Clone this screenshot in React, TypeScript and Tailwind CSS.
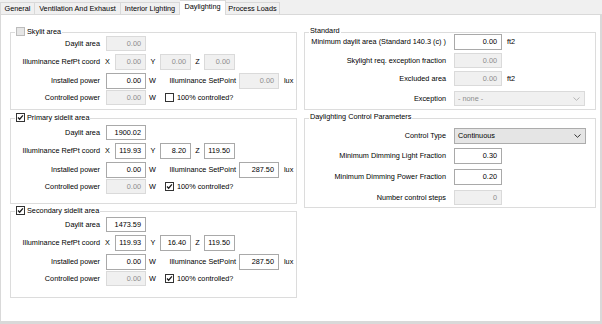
import type { ReactNode } from 'react';

type BoxProps = { value: string; off?: boolean; className: string };

function Box({ value, off, className }: BoxProps) {
  return (
    <div
      className={`flex h-full items-center justify-end border pr-[4px] ${
        off ? 'border-[#dadada] bg-[#f0f0f0] text-[#8d8d8d]' : 'border-[#a9a9a9] bg-white text-black'
      } ${className}`}
    >
      {value}
    </div>
  );
}

function Check({ on, off }: { on?: boolean; off?: boolean }) {
  return (
    <span
      className={`flex h-[9px] w-[9px] shrink-0 items-center justify-center border ${
        off ? 'border-[#bcbcbc] bg-[#e6e6e6]' : 'border-[#333333] bg-white'
      }`}
    >
      {on && (
        <svg viewBox="0 0 9 9" className="h-[7px] w-[7px]">
          <path d="M1.3 4.6 L3.4 6.7 L7.6 1.8" stroke="#1a1a1a" strokeWidth="1.7" fill="none" />
        </svg>
      )}
    </span>
  );
}

function Chevron({ color }: { color: string }) {
  return (
    <svg viewBox="0 0 7 4" className="h-[4px] w-[7px]">
      <path d="M0.5 0.5 L3.5 3.3 L6.5 0.5" stroke={color} strokeWidth="1" fill="none" />
    </svg>
  );
}

type Side = {
  title: string;
  on: boolean;
  off: boolean;
  daylit: string;
  x: string;
  y: string;
  z: string;
  setpoint: string;
  all: boolean;
};

function SideGroup({ g, box }: { g: Side; box: string }) {
  return (
    <div className={`relative border border-[#dcdcdc] ${box}`}>
      <div className="absolute -top-[6px] left-[4px] flex items-center gap-[2px] bg-white px-[1px]">
        <Check on={g.on} off={g.off} />
        <span>{g.title}</span>
      </div>
      <div className="flex h-[15px] items-center">
        <span className="w-[89px] text-right">Daylit area</span>
        <Box value={g.daylit} off={g.off} className="ml-[6px] w-[40px]" />
      </div>
      <div className="mt-[3px] flex h-[16px] items-center">
        <span className="w-[89px] text-right">Illuminance RefPt coord</span>
        <span className="w-[15px] text-center">X</span>
        <Box value={g.x} off={g.off} className="w-[31px]" />
        <span className="w-[14px] text-center">Y</span>
        <Box value={g.y} off={g.off} className="w-[31px]" />
        <span className="w-[13px] text-center">Z</span>
        <Box value={g.z} off={g.off} className="w-[31px]" />
      </div>
      <div className="mt-[3px] flex h-[16px] items-center">
        <span className="w-[89px] text-right">Installed power</span>
        <Box value="0.00" className="ml-[6px] w-[40px]" />
        <span className="w-[22px] pl-[3px]">W</span>
        <span className="w-[68px] text-right">Illuminance SetPoint</span>
        <Box value={g.setpoint} off={g.off} className="ml-[3px] w-[40px]" />
        <span className="ml-[5px]">lux</span>
      </div>
      <div className="mt-[1px] flex h-[15px] items-center">
        <span className="w-[89px] text-right">Controlled power</span>
        <Box value="0.00" off className="ml-[6px] w-[40px]" />
        <span className="w-[19px] pl-[3px]">W</span>
        <Check on={g.all} />
        <span className="ml-[3px]">100% controlled?</span>
      </div>
    </div>
  );
}

function RightGroup({ title, box, children }: { title: string; box: string; children: ReactNode }) {
  return (
    <div className={`relative border border-[#dcdcdc] ${box}`}>
      <span className="absolute -top-[6px] left-[4px] bg-white px-[1px]">{title}</span>
      {children}
    </div>
  );
}

function Row({ label, className, children }: { label: string; className: string; children: ReactNode }) {
  return (
    <div className={`flex items-center ${className}`}>
      <span className="w-[141px] text-right">{label}</span>
      <div className="ml-[8px] flex h-full items-center">{children}</div>
    </div>
  );
}

const tabs = [
  { name: 'General', w: 'w-[35px] border-l' },
  { name: 'Ventilation And Exhaust', w: 'w-[86px]' },
  { name: 'Interior Lighting', w: 'w-[59px]' },
  { name: 'Daylighting', w: 'w-[46px]', active: true },
  { name: 'Process Loads', w: 'w-[54px]' },
];

const skylit: Side = { title: 'Skylit area', on: false, off: true, daylit: '0.00', x: '0.00', y: '0.00', z: '0.00', setpoint: '0.00', all: false };
const primary: Side = { title: 'Primary sidelit area', on: true, off: false, daylit: '1900.02', x: '119.93', y: '8.20', z: '119.50', setpoint: '287.50', all: true };
const secondary: Side = { title: 'Secondary sidelit area', on: true, off: false, daylit: '1473.59', x: '119.93', y: '16.40', z: '119.50', setpoint: '287.50', all: true };

export default function App() {
  return (
    <div className="h-[324px] w-[602px] overflow-hidden bg-[#d9d9d9] font-['Liberation_Sans',Arial,sans-serif] text-[7.3px] leading-none text-black">
      <div className="flex h-[14px] items-end bg-[#f0f0f0]">
        {tabs.map((t) =>
          t.active ? (
            <div
              key={t.name}
              className={`relative z-10 -mb-px flex h-[15px] items-center justify-center border-r border-t border-[#d9d9d9] bg-white pb-[2px] ${t.w}`}
            >
              {t.name}
            </div>
          ) : (
            <div
              key={t.name}
              className={`flex h-[12px] items-center justify-center border-r border-t border-[#d9d9d9] bg-[#f0f0f0] ${t.w}`}
            >
              {t.name}
            </div>
          )
        )}
      </div>
      <div className="flex h-[308px] w-[601px] gap-[7px] border border-[#d9d9d9] bg-white pl-[9px] pt-[17px]">
        <div className="flex w-[287px] flex-col">
          <SideGroup g={skylit} box="h-[78px] pt-[3px]" />
          <SideGroup g={primary} box="mt-[8px] h-[86px] pt-[6px]" />
          <SideGroup g={secondary} box="mt-[7px] h-[87px] pt-[5px]" />
        </div>
        <div className="flex w-[292px] flex-col">
          <RightGroup title="Standard" box="h-[78px] pt-[1px]">
            <Row label="Minimum daylit area (Standard 140.3 (c) )" className="h-[16px]">
              <Box value="0.00" className="w-[48px]" />
              <span className="ml-[5px]">ft2</span>
            </Row>
            <Row label="Skylight req. exception fraction" className="mt-[3px] h-[15px]">
              <Box value="0.00" off className="w-[48px]" />
            </Row>
            <Row label="Excluded area" className="mt-[3px] h-[15px]">
              <Box value="0.00" off className="w-[48px]" />
              <span className="ml-[5px]">ft2</span>
            </Row>
            <Row label="Exception" className="mt-[5px] h-[15px]">
              <div className="flex h-full w-[131px] items-center justify-between border border-[#dadada] bg-[#f0f0f0] pl-[3px] pr-[4px] text-[#8d8d8d]">
                <span>- none -</span>
                <Chevron color="#b5b5b5" />
              </div>
            </Row>
          </RightGroup>
          <RightGroup title="Daylighting Control Parameters" box="mt-[8px] h-[90px] pt-[9px]">
            <Row label="Control Type" className="h-[16px]">
              <div className="flex h-full w-[132px] items-center justify-between border border-[#acacac] bg-[#e5e5e5] pl-[3px] pr-[4px]">
                <span>Continuous</span>
                <Chevron color="#333333" />
              </div>
            </Row>
            <Row label="Minimum Dimming Light Fraction" className="mt-[4px] h-[16px]">
              <Box value="0.30" className="w-[48px]" />
            </Row>
            <Row label="Minimum Dimming Power Fraction" className="mt-[5px] h-[16px]">
              <Box value="0.20" className="w-[48px]" />
            </Row>
            <Row label="Number control steps" className="mt-[5px] h-[15px]">
              <Box value="0" off className="w-[48px]" />
            </Row>
          </RightGroup>
        </div>
      </div>
    </div>
  );
}
